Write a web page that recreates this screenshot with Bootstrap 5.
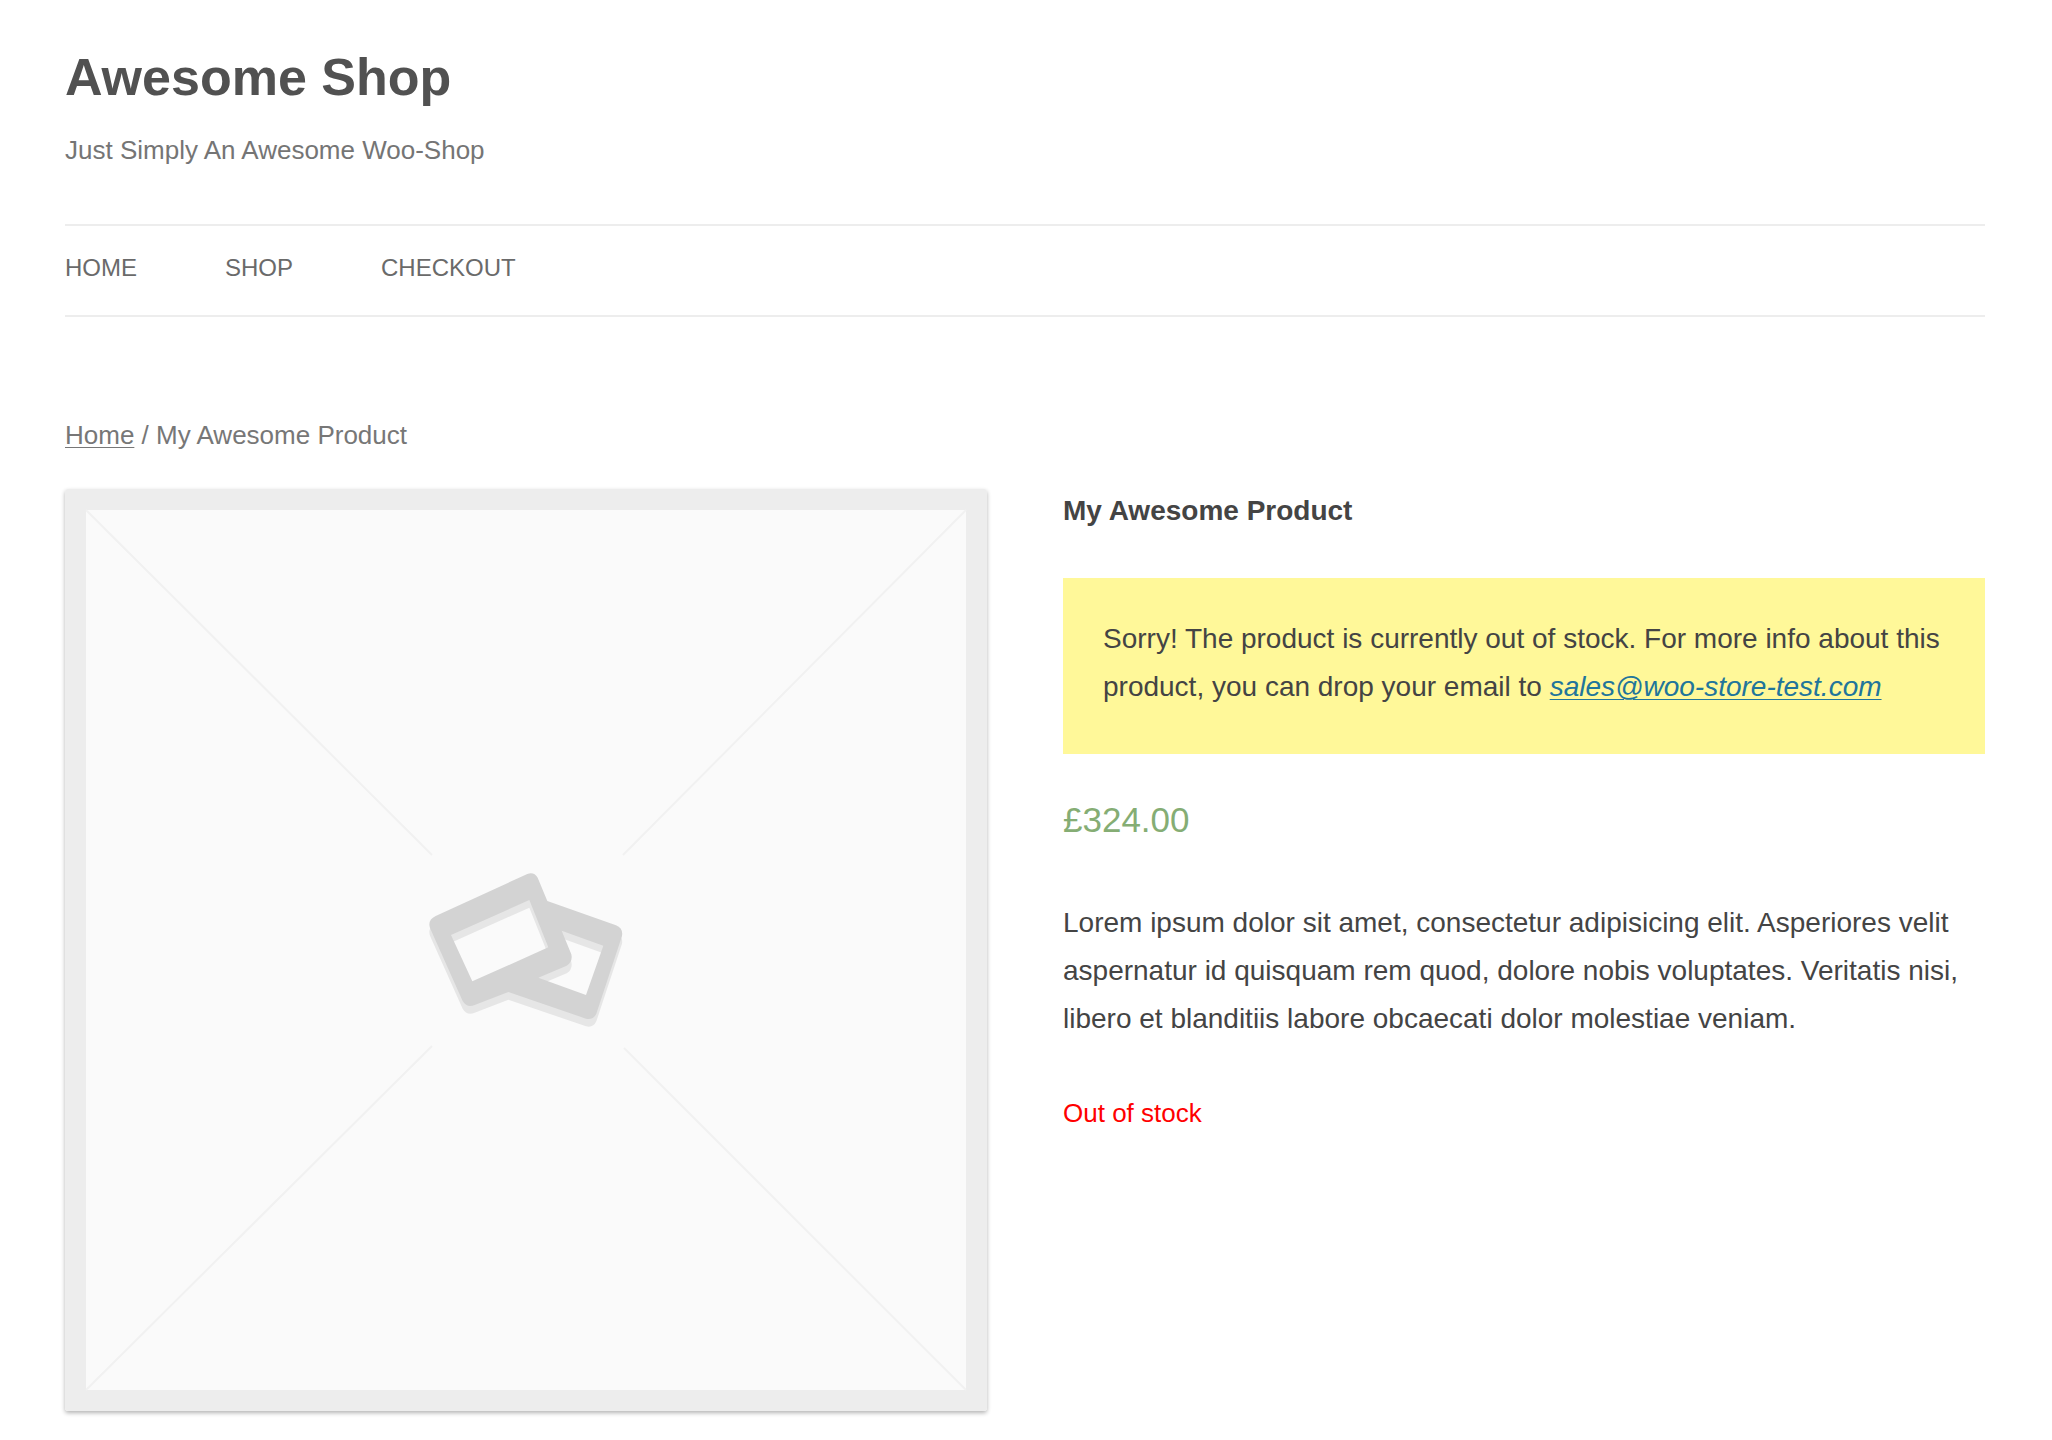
<!DOCTYPE html>
<html lang="en">
<head>
<meta charset="utf-8">
<meta name="viewport" content="width=device-width, initial-scale=1">
<title>My Awesome Product – Awesome Shop</title>
<link rel="stylesheet" href="https://cdn.jsdelivr.net/npm/bootstrap@5.3.0/dist/css/bootstrap.min.css">
<style>
body { font-family: "Liberation Sans", Arial, sans-serif; font-size: 28px; line-height: 48px; color: #444; background: #fff; }
.site { padding: 48px 67px 24px 65px; }
.site-title { font-size: 52px; line-height: 58px; margin-bottom: 20px; }
.site-title a { color: #515151; }
.tagline { font-size: 26px; color: #757575; margin-bottom: 50px; }
.main-nav { border: solid #ededed; border-width: 2px 0; padding: 18px 0 23px; gap: 0 88px; margin-bottom: 94px; }
.main-nav .nav-link { font-size: 24px; line-height: 48px; color: #6a6a6a; padding: 0; }
.trail { font-size: 26px; line-height: 48px; color: #777; margin-bottom: 30px; }
.trail a { color: #777; text-underline-offset: 3px; text-decoration-thickness: 1px; }
.product { --bs-gutter-x: 76px; }
.photo { border-radius: 3px; box-shadow: 0 2px 4px rgba(0, 0, 0, .3); }
.product-title { font-size: 28px; line-height: 44px; margin-bottom: 45px; }
.notice { background: #fff899; padding: 37px 40px 43px; margin-bottom: 34px; }
.notice a { color: #21759b; text-underline-offset: 3px; text-decoration-thickness: 1px; }
.price { font-size: 35px; line-height: 64px; color: #85ad74; margin-bottom: 47px; }
.summary { margin-bottom: 46px; }
.stock { font-size: 26px; color: #f00; }
</style>
</head>
<body>
<div class="container-fluid site">
  <header>
    <h1 class="site-title fw-bold"><a href="#" class="text-decoration-none">Awesome Shop</a></h1>
    <p class="tagline">Just Simply An Awesome Woo-Shop</p>
    <nav class="nav main-nav text-uppercase" aria-label="Main">
      <a class="nav-link" href="#">Home</a>
      <a class="nav-link" href="#">Shop</a>
      <a class="nav-link" href="#">Checkout</a>
    </nav>
  </header>
  <nav class="trail" aria-label="Breadcrumb"><a href="#">Home</a> / My Awesome Product</nav>
  <main class="row product">
    <div class="col-12 col-md-6">
      <svg class="photo d-block w-100 h-auto" viewBox="0 0 922 922" role="img" aria-label="Product image placeholder">
        <defs>
          <path id="frames" fill-rule="evenodd" d="M107 228 L382 102 Q402 95 413 113 L442 183 L648 256 Q670 265 666 288 L589 521 Q580 541 558 536 L325 456 L224 495 Q201 505 188 483 L90 264 Q82 240 107 228 Z M153 285 L217 424 L445 322 L388 180 Z M485 272 L514 343 Q519 365 500 377 L415 413 L558 465 L610 317 Z"/>
        </defs>
        <rect width="922" height="922" fill="#ededed"/>
        <rect x="21" y="21" width="880" height="880" fill="#fafafa"/>
        <path d="M21 21 L367 366 M901 21 L558 366 M21 901 L367 557 M901 901 L559 559" stroke="#f1f1f1" stroke-width="2" fill="none"/>
        <g transform="translate(335 351) scale(.33333)">
          <use href="#frames" y="23" fill="#e6e6e6"/>
          <use href="#frames" fill="#d3d3d3"/>
        </g>
      </svg>
    </div>
    <div class="col-12 col-md-6">
      <h2 class="product-title fw-bold">My Awesome Product</h2>
      <div class="notice">Sorry! The product is currently out of stock. For more info about this product, you can drop your email to <a class="fst-italic" href="mailto:sales@woo-store-test.com">sales@woo-store-test.com</a></div>
      <p class="price">£324.00</p>
      <p class="summary">Lorem ipsum dolor sit amet, consectetur adipisicing elit. Asperiores velit aspernatur id quisquam rem quod, dolore nobis voluptates. Veritatis nisi, libero et blanditiis labore obcaecati dolor molestiae veniam.</p>
      <p class="stock mb-0">Out of stock</p>
    </div>
  </main>
</div>
<script src="https://cdn.jsdelivr.net/npm/bootstrap@5.3.0/dist/js/bootstrap.bundle.min.js"></script>
</body>
</html>
